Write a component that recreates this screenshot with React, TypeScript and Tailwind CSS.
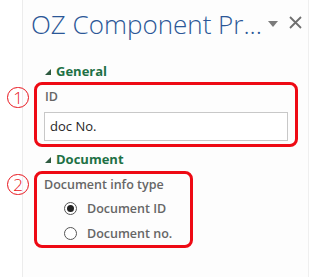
import { ReactNode } from "react"

function Marker({ n }: { n: number }) {
  return (
    <div className="w-[27px] shrink-0 pl-[7px]">
      <div className="flex h-[21px] w-[22px] items-center justify-center rounded-full border-[1.5px] border-[#e8141c] text-[17px] font-light leading-none text-[#e8141c]">
        {n}
      </div>
    </div>
  )
}

function Heading({ children }: { children: ReactNode }) {
  return (
    <div className="flex items-center gap-[5px] pl-[45px]">
      <svg width="6" height="6" viewBox="0 0 6 6" className="mt-[2px]">
        <polygon points="6,0 6,6 0,6" fill="#2f5b40" />
      </svg>
      <span className="text-[13px] font-bold leading-[16px] text-[#1e7145]">{children}</span>
    </div>
  )
}

function Radio({ checked, label }: { checked?: boolean; label: string }) {
  return (
    <div className="flex h-[25px] items-center gap-[10px] pl-[27px]">
      <span className="flex h-[13px] w-[13px] items-center justify-center rounded-full border border-[#555555] bg-white">
        {checked && <span className="h-[7px] w-[7px] rounded-full bg-[#222222]" />}
      </span>
      <span className="text-[12.5px] font-semibold leading-[16px] text-[#666666]">{label}</span>
    </div>
  )
}

export default function App() {
  return (
    <div className="h-[277px] w-[311px] overflow-hidden bg-[linear-gradient(to_right,#ffffff_22px,#ececec_22px,#ececec_23px,#fdfdfd_23px,#fdfdfd_308px,#efefef_308px,#efefef_309px,#ffffff_309px)] font-['Open_Sans',sans-serif]">
      <div className="flex h-[60px] items-start pl-[31px] pt-[5px]">
        <h1 className="flex-1 text-[26px] font-light leading-[38px] text-[#2b5797]">OZ Component Pr...</h1>
        <div className="flex items-center gap-[11px] pr-[9px] pt-[14px]">
          <svg width="10" height="6" viewBox="0 0 10 6">
            <polygon points="0,0 10,0 5,6" fill="#7b7b7b" />
          </svg>
          <svg width="13" height="13" viewBox="0 0 13 13" className="-mt-[3px]">
            <path d="M1 1 L12 12 M12 1 L1 12" stroke="#6f6f6f" strokeWidth="1.8" />
          </svg>
        </div>
      </div>

      <div className="flex h-[22px] items-center">
        <Heading>General</Heading>
      </div>
      <div className="flex items-start">
        <div className="pt-[5px]">
          <Marker n={1} />
        </div>
        <div className="ml-[7px] flex h-[65px] w-[264px] flex-col rounded-[8px] border-[3px] border-[#ee0a14] pt-[4px]">
          <div className="pl-[8px] text-[12.5px] font-semibold leading-[16px] text-[#666666]">ID</div>
          <div className="ml-[7px] mt-[7px] flex h-[29px] w-[244px] items-center border border-[#c8c8c8] bg-white pl-[5px] text-[13px] leading-none text-[#262626]">
            doc No.
          </div>
        </div>
      </div>

      <div className="flex h-[24px] items-center">
        <Heading>Document</Heading>
      </div>
      <div className="flex items-start">
        <div className="pt-[3px]">
          <Marker n={2} />
        </div>
        <div className="ml-[7px] flex h-[77px] w-[159px] flex-col rounded-[8px] border-[3px] border-[#ee0a14] pt-[3px]">
          <div className="pl-[7px] text-[12.5px] font-semibold leading-[16px] text-[#666666]">Document info type</div>
          <div className="mt-[3px]">
            <Radio checked label="Document ID" />
            <Radio label="Document no." />
          </div>
        </div>
      </div>
    </div>
  )
}
